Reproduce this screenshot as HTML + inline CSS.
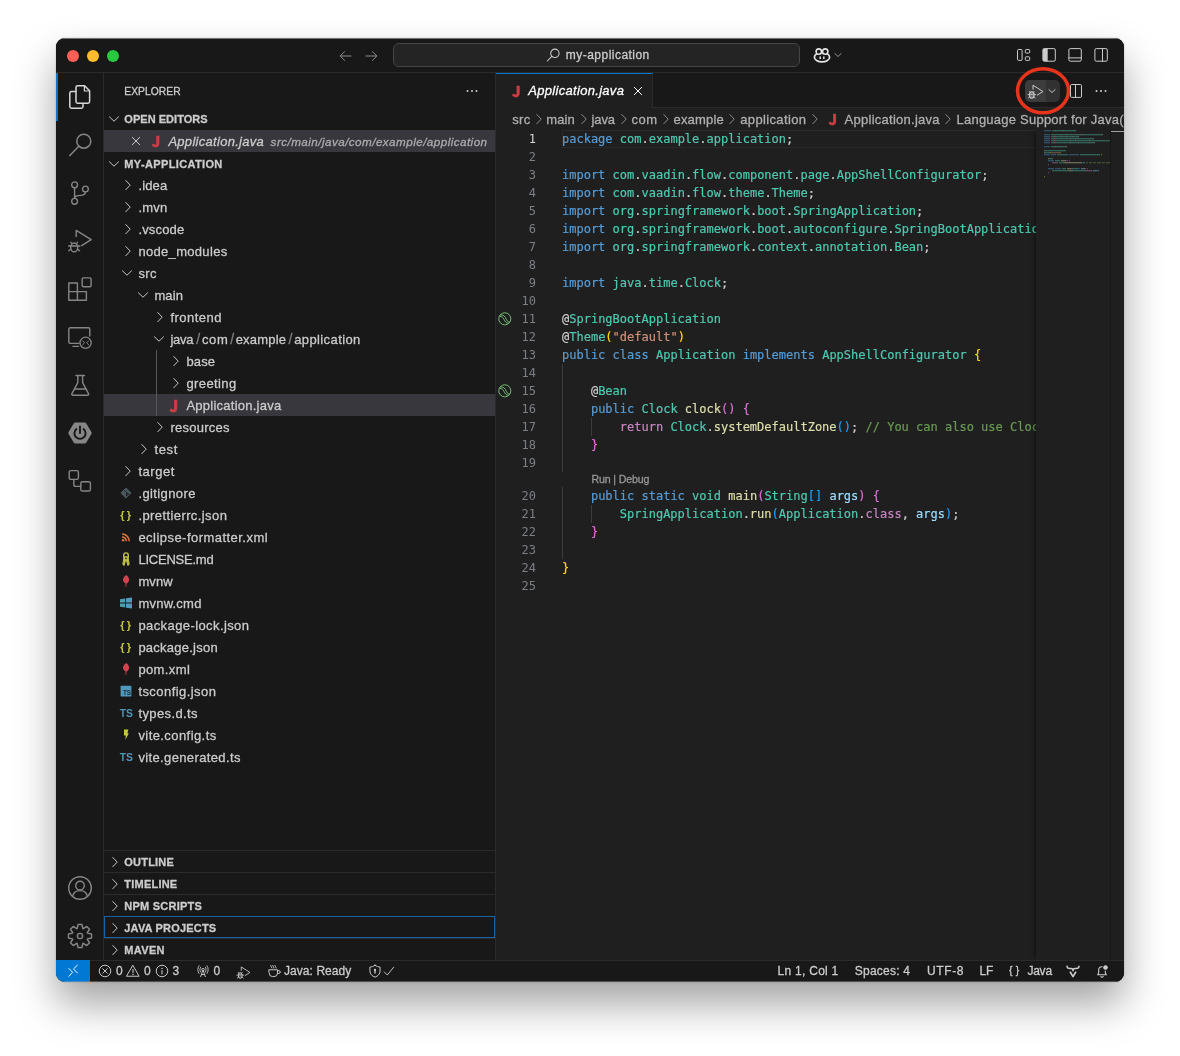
<!DOCTYPE html>
<html lang="en">
<head>
<meta charset="utf-8">
<title>Application.java — my-application</title>
<style>
html,body{margin:0;padding:0;background:#fff;}
body{width:1180px;height:1056px;position:relative;overflow:hidden;font-family:"Liberation Sans", sans-serif;}
#win{position:absolute;left:56px;top:38px;width:1068px;height:944px;border-radius:9px;background:#181818;box-shadow:0 22px 40px rgba(0,0,0,.36),0 0 1.5px rgba(0,0,0,.3);overflow:hidden;}
#in{position:absolute;left:-56px;top:-38px;width:1180px;height:1056px;will-change:transform;}
.a{position:absolute;display:block;}
.t{position:absolute;white-space:pre;font-family:"Liberation Sans", sans-serif;-webkit-text-stroke:0.28px currentColor;}
.jv{font-family:"Noto Sans CJK JP","Liberation Sans",sans-serif;-webkit-text-stroke:0.75px currentColor;}
svg{color:#ccc;overflow:visible;}
.code{position:absolute;left:496px;top:130px;width:540px;height:830px;overflow:hidden;font-family:"DejaVu Sans Mono","Liberation Mono",monospace;font-size:12px;color:#ccc;}
.ln{position:absolute;left:0;width:40px;text-align:right;height:18px;line-height:18px;color:#7b7f86;white-space:pre;}
.cl{position:absolute;left:66px;height:18px;line-height:18px;white-space:pre;-webkit-text-stroke:0.2px currentColor;}
.kw{color:#569cd6}.ty{color:#4ec9b0}.st{color:#ce9178}.fn{color:#dcdcaa}.ct{color:#c586c0}.va{color:#9cdcfe}.cm{color:#6a9955}
.b1{color:#ffd700}.b2{color:#da70d6}.b3{color:#179fff}
</style>
</head>
<body>
<div id="win"><div id="in">
<div class="a" style="left:56px;top:38px;width:1068px;height:35px;background:#181818;border-bottom:1px solid #2b2b2b;box-sizing:border-box;"></div>
<div class="a" style="left:67px;top:49.5px;width:12px;height:12px;background:#ff5f57;border-radius:50%;"></div>
<div class="a" style="left:87px;top:49.5px;width:12px;height:12px;background:#febc2e;border-radius:50%;"></div>
<div class="a" style="left:107px;top:49.5px;width:12px;height:12px;background:#28c840;border-radius:50%;"></div>
<svg class="a" style="left:337.3px;top:47.5px;color:#8e8e8e" width="16" height="16" viewBox="0 0 16 16"><path d="M14 8 H3.4 M7.6 3.6 L3.2 8 L7.6 12.4" fill="none" stroke="currentColor" stroke-linecap="round" stroke-linejoin="round" stroke-width="1.0" /></svg>
<svg class="a" style="left:363.3px;top:47.5px;color:#8e8e8e" width="16" height="16" viewBox="0 0 16 16"><path d="M3 8 H13.6 M9.4 3.6 L13.8 8 L9.4 12.4" fill="none" stroke="currentColor" stroke-linecap="round" stroke-linejoin="round" stroke-width="1.0" /></svg>
<div class="a" style="left:393px;top:43px;width:407px;height:24px;background:#242424;border:1px solid #464646;border-radius:6px;box-sizing:border-box;"></div>
<svg class="a" style="left:545.4px;top:46.8px;" width="16" height="16" viewBox="0 0 16 16"><circle cx="9.9" cy="6.3" r="4.2" fill="none" stroke="currentColor" stroke-width="1.05"/><path d="M6.8 9.4 L2.3 14.0" fill="none" stroke="currentColor" stroke-linecap="round" stroke-linejoin="round" stroke-width="1.05" /></svg>
<span class="t" style="left:565.8px;top:43.7px;height:22px;line-height:22px;font-size:12px;color:#cccccc;letter-spacing:0.471px;">my-application</span>
<svg class="a" style="left:812.5px;top:46px;color:#e4e4e4" width="18" height="18" viewBox="0 0 18 18"><ellipse cx="9" cy="11.2" rx="7.6" ry="4.7" fill="none" stroke="currentColor" stroke-width="1.7"/><circle cx="5.8" cy="5.6" r="2.7" fill="#181818" stroke="currentColor" stroke-width="1.6"/><circle cx="12.2" cy="5.6" r="2.7" fill="#181818" stroke="currentColor" stroke-width="1.6"/><path d="M7.2 10.4 V13 M10.8 10.4 V13" fill="none" stroke="currentColor" stroke-width="1.5"/></svg>
<svg class="a" style="left:829.5px;top:47px;color:#9a9a9a" width="16" height="16" viewBox="0 0 16 16"><path d="M4.9 6.6 L8 9.5 L11.1 6.6" fill="none" stroke="currentColor" stroke-linecap="round" stroke-linejoin="round" stroke-width="0.95" /></svg>
<svg class="a" style="left:1015px;top:47px;" width="16" height="16" viewBox="0 0 16 16"><rect x="2.5" y="2.5" width="4.6" height="10.9" rx="1.0" fill="none" stroke="currentColor" stroke-width="1.0"/><rect x="10.3" y="2.5" width="4.4" height="3.6" rx="0.9" fill="none" stroke="currentColor" stroke-width="1.0"/><rect x="10.3" y="9.8" width="4.4" height="3.6" rx="0.9" fill="none" stroke="currentColor" stroke-width="1.0"/></svg>
<svg class="a" style="left:1041px;top:47px;" width="16" height="16" viewBox="0 0 16 16"><rect x="1.9" y="1.6" width="12.4" height="12.6" rx="1.4" fill="none" stroke="currentColor" stroke-width="1.0"/><path d="M3.2 1.6 H6.7 V14.2 H3.2 A1.4 1.4 0 0 1 1.9 12.8 V3 A1.4 1.4 0 0 1 3.2 1.6 Z" fill="currentColor"/></svg>
<svg class="a" style="left:1067px;top:47px;" width="16" height="16" viewBox="0 0 16 16"><rect x="1.9" y="1.6" width="12.4" height="12.6" rx="1.4" fill="none" stroke="currentColor" stroke-width="1.0"/><path d="M1.9 10.9 H14.3" fill="none" stroke="currentColor" stroke-linecap="round" stroke-linejoin="round" stroke-width="1.0" /></svg>
<svg class="a" style="left:1093px;top:47px;" width="16" height="16" viewBox="0 0 16 16"><rect x="1.9" y="1.6" width="12.4" height="12.6" rx="1.4" fill="none" stroke="currentColor" stroke-width="1.0"/><path d="M9.5 1.6 V14.2" fill="none" stroke="currentColor" stroke-linecap="round" stroke-linejoin="round" stroke-width="1.0" /></svg>
<div class="a" style="left:56px;top:73px;width:48px;height:887px;background:#181818;border-right:1px solid #2b2b2b;box-sizing:border-box;"></div>
<div class="a" style="left:56px;top:73px;width:2px;height:48px;background:#0a74cc;"></div>
<svg class="a" style="left:68px;top:85px;color:#d7d7d7" width="24" height="24" viewBox="0 0 24 24"><path d="M9.6 0.8 H16.6 L21.6 5.8 V16.6 A1.6 1.6 0 0 1 20 18.2 H9.6 A1.6 1.6 0 0 1 8 16.6 V2.4 A1.6 1.6 0 0 1 9.6 0.8 Z" fill="none" stroke="currentColor" stroke-linecap="round" stroke-linejoin="round" stroke-width="1.5" /><path d="M16.4 1 V6 H21.4" fill="none" stroke="currentColor" stroke-linecap="round" stroke-linejoin="round" stroke-width="1.2" /><path d="M7.8 6.6 H3.4 A1.6 1.6 0 0 0 1.8 8.2 V21.6 A1.6 1.6 0 0 0 3.4 23.2 H13.4 A1.6 1.6 0 0 0 15 21.6 V18.4" fill="none" stroke="currentColor" stroke-linecap="round" stroke-linejoin="round" stroke-width="1.5" /></svg>
<svg class="a" style="left:68px;top:133px;color:#868686" width="24" height="24" viewBox="0 0 24 24"><circle cx="15.8" cy="8.2" r="7" fill="none" stroke="currentColor" stroke-width="1.5"/><path d="M10.8 13.2 L1.8 22.6" fill="none" stroke="currentColor" stroke-linecap="round" stroke-linejoin="round" stroke-width="1.5" /></svg>
<svg class="a" style="left:68px;top:181px;color:#868686" width="24" height="24" viewBox="0 0 24 24"><circle cx="6.6" cy="3.8" r="2.9" fill="none" stroke="currentColor" stroke-width="1.4"/><circle cx="6.6" cy="20.3" r="2.9" fill="none" stroke="currentColor" stroke-width="1.4"/><circle cx="17.4" cy="8" r="2.9" fill="none" stroke="currentColor" stroke-width="1.4"/><path d="M6.6 6.8 V17.3 M17.4 11 C17.4 14.4 13.6 14.6 10.4 14.6 C8 14.6 6.6 15.6 6.6 17.3" fill="none" stroke="currentColor" stroke-linecap="round" stroke-linejoin="round" stroke-width="1.4" /></svg>
<svg class="a" style="left:68px;top:229px;color:#868686" width="24" height="24" viewBox="0 0 24 24"><path d="M8.2 7.6 V1.4 L23.2 10.6 L13.6 16.6" fill="none" stroke="currentColor" stroke-linecap="round" stroke-linejoin="round" stroke-width="1.4" /><ellipse cx="6.2" cy="18.4" rx="3.5" ry="4.4" fill="none" stroke="currentColor" stroke-width="1.4"/><path d="M4 14.6 L2.8 13.2 M8.4 14.6 L9.6 13.2 M2.7 17 H0.6 M9.7 17 H11.8 M2.7 20.2 L0.8 21.8 M9.7 20.2 L11.6 21.8 M3 17 H9.4" fill="none" stroke="currentColor" stroke-linecap="round" stroke-linejoin="round" stroke-width="1.3" /></svg>
<svg class="a" style="left:68px;top:277px;color:#868686" width="24" height="24" viewBox="0 0 24 24"><path d="M0.8 6 H9.4 V14.6 H18.4 V23.2 H0.8 Z M0.8 14.6 H9.4 V23.2" fill="none" stroke="currentColor" stroke-linecap="round" stroke-linejoin="round" stroke-width="1.4" /><rect x="14.2" y="0.9" width="8.9" height="8.9" rx="1.2" fill="none" stroke="currentColor" stroke-width="1.4"/></svg>
<svg class="a" style="left:68px;top:325px;color:#868686" width="24" height="24" viewBox="0 0 24 24"><path d="M11 18.4 H2.2 A1.4 1.4 0 0 1 0.8 17 V4.2 A1.4 1.4 0 0 1 2.2 2.8 H20.4 A1.4 1.4 0 0 1 21.8 4.2 V11" fill="none" stroke="currentColor" stroke-linecap="round" stroke-linejoin="round" stroke-width="1.4" /><path d="M5 21.4 H10.4" fill="none" stroke="currentColor" stroke-linecap="round" stroke-linejoin="round" stroke-width="1.4" /><circle cx="17.6" cy="17.8" r="5.6" fill="none" stroke="currentColor" stroke-width="1.3"/><path d="M14.6 15.8 L16.6 17.8 L14.6 19.8 M20.6 15.8 L18.6 17.8 L20.6 19.8" fill="none" stroke="currentColor" stroke-linecap="round" stroke-linejoin="round" stroke-width="1.0" /></svg>
<svg class="a" style="left:68px;top:373px;color:#868686" width="24" height="24" viewBox="0 0 24 24"><path d="M8 2.6 H16.4" fill="none" stroke="currentColor" stroke-linecap="round" stroke-linejoin="round" stroke-width="1.5" /><path d="M9.8 2.8 V9.6 L3.8 20.8 A1 1 0 0 0 4.6 22.2 H19.8 A1 1 0 0 0 20.6 20.8 L14.6 9.6 V2.8" fill="none" stroke="currentColor" stroke-linecap="round" stroke-linejoin="round" stroke-width="1.4" /><path d="M6.6 16 H17.8" fill="none" stroke="currentColor" stroke-linecap="round" stroke-linejoin="round" stroke-width="1.4" /></svg>
<svg class="a" style="left:68px;top:421px;color:#868686" width="24" height="24" viewBox="0 0 24 24"><path d="M7.4 1.4 H16.6 A2 2 0 0 1 18.3 2.4 L23.4 11 A2 2 0 0 1 23.4 13 L18.3 21.6 A2 2 0 0 1 16.6 22.6 H7.4 A2 2 0 0 1 5.7 21.6 L0.6 13 A2 2 0 0 1 0.6 11 L5.7 2.4 A2 2 0 0 1 7.4 1.4 Z" fill="currentColor"/><path d="M8.4 8 A5.6 5.6 0 1 0 15.6 8" fill="none" stroke="#181818" stroke-width="1.9" stroke-linecap="round"/><path d="M12 5.4 V12" fill="none" stroke="#181818" stroke-width="1.9" stroke-linecap="round"/></svg>
<svg class="a" style="left:68px;top:469px;color:#868686" width="24" height="24" viewBox="0 0 24 24"><rect x="1.2" y="1.6" width="9.2" height="8.8" rx="1.6" fill="none" stroke="currentColor" stroke-width="1.4"/><rect x="12.8" y="12.8" width="9.6" height="9.2" rx="1.6" fill="none" stroke="currentColor" stroke-width="1.4"/><path d="M5.8 10.6 V15.4 A2 2 0 0 0 7.8 17.4 H12.6" fill="none" stroke="currentColor" stroke-linecap="round" stroke-linejoin="round" stroke-width="1.4" /></svg>
<svg class="a" style="left:68px;top:876px;color:#868686" width="24" height="24" viewBox="0 0 24 24"><circle cx="12" cy="12" r="11.3" fill="none" stroke="currentColor" stroke-width="1.4"/><circle cx="12" cy="9.6" r="4.3" fill="none" stroke="currentColor" stroke-width="1.4"/><path d="M4.6 20.4 C5.4 16.6 8 14.6 12 14.6 C16 14.6 18.6 16.6 19.4 20.4" fill="none" stroke="currentColor" stroke-linecap="round" stroke-linejoin="round" stroke-width="1.4" /></svg>
<svg class="a" style="left:68px;top:924px;color:#868686" width="24" height="24" viewBox="0 0 24 24"><path d="M9.18 4.51 L10.02 0.47 L13.98 0.47 L14.82 4.51 L15.30 4.71 L18.75 2.45 L21.55 5.25 L19.29 8.70 L19.49 9.18 L23.53 10.02 L23.53 13.98 L19.49 14.82 L19.29 15.30 L21.55 18.75 L18.75 21.55 L15.30 19.29 L14.82 19.49 L13.98 23.53 L10.02 23.53 L9.18 19.49 L8.70 19.29 L5.25 21.55 L2.45 18.75 L4.71 15.30 L4.51 14.82 L0.47 13.98 L0.47 10.02 L4.51 9.18 L4.71 8.70 L2.45 5.25 L5.25 2.45 L8.70 4.71 Z" fill="none" stroke="currentColor" stroke-linecap="round" stroke-linejoin="round" stroke-width="1.4" /><circle cx="12" cy="12" r="2.6" fill="none" stroke="currentColor" stroke-width="1.4"/></svg>
<div class="a" style="left:104px;top:73px;width:392px;height:887px;background:#181818;border-right:1px solid #2b2b2b;box-sizing:border-box;"></div>
<span class="t" style="left:124.3px;top:80.6px;height:22px;line-height:22px;font-size:10.3px;color:#cccccc;letter-spacing:0.029px;">EXPLORER</span>
<svg class="a" style="left:464px;top:83px;" width="16" height="16" viewBox="0 0 16 16"><circle cx="3.5" cy="8" r="1" fill="currentColor"/><circle cx="8" cy="8" r="1" fill="currentColor"/><circle cx="12.5" cy="8" r="1" fill="currentColor"/></svg>
<svg class="a" style="left:106.3px;top:111px;" width="16" height="16" viewBox="0 0 16 16"><path d="M3.4 5.8 L8 10.2 L12.6 5.8" fill="none" stroke="currentColor" stroke-linecap="round" stroke-linejoin="round" stroke-width="0.95" /></svg>
<span class="t" style="left:124.3px;top:107.6px;height:22px;line-height:22px;font-size:11px;color:#cccccc;font-weight:700;letter-spacing:0.042px;">OPEN EDITORS</span>
<div class="a" style="left:104px;top:130px;width:391px;height:22px;background:#37373d;"></div>
<svg class="a" style="left:128px;top:133px;" width="16" height="16" viewBox="0 0 16 16"><path d="M4.3 4.3 L11.7 11.7 M11.7 4.3 L4.3 11.7" fill="none" stroke="currentColor" stroke-linecap="round" stroke-linejoin="round" stroke-width="1.0" /></svg>
<span class="t jv" style="left:151.8px;top:130.2px;height:22px;line-height:22px;font-size:15px;color:#cc3e44;font-weight:700;">J</span>
<span class="t" style="left:168.4px;top:130.6px;height:22px;line-height:22px;font-size:13px;color:#cccccc;font-style:italic;letter-spacing:0.289px;">Application.java</span>
<span class="t" style="left:270.6px;top:130.6px;height:22px;line-height:22px;font-size:11.7px;color:#adadaf;font-style:italic;letter-spacing:0.438px;">src/main/java/com/example/application</span>
<svg class="a" style="left:106.3px;top:156px;" width="16" height="16" viewBox="0 0 16 16"><path d="M3.4 5.8 L8 10.2 L12.6 5.8" fill="none" stroke="currentColor" stroke-linecap="round" stroke-linejoin="round" stroke-width="0.95" /></svg>
<span class="t" style="left:124.3px;top:152.6px;height:22px;line-height:22px;font-size:11px;color:#cccccc;font-weight:700;letter-spacing:0.362px;">MY-APPLICATION</span>
<svg class="a" style="left:119.8px;top:177px;" width="16" height="16" viewBox="0 0 16 16"><path d="M5.8 3.5 L10.2 8.1 L5.8 12.7" fill="none" stroke="currentColor" stroke-linecap="round" stroke-linejoin="round" stroke-width="0.95" /></svg>
<span class="t" style="left:138.4px;top:174.6px;height:22px;line-height:22px;font-size:13px;color:#cccccc;letter-spacing:0.149px;">.idea</span>
<svg class="a" style="left:119.8px;top:199px;" width="16" height="16" viewBox="0 0 16 16"><path d="M5.8 3.5 L10.2 8.1 L5.8 12.7" fill="none" stroke="currentColor" stroke-linecap="round" stroke-linejoin="round" stroke-width="0.95" /></svg>
<span class="t" style="left:138.4px;top:196.6px;height:22px;line-height:22px;font-size:13px;color:#cccccc;letter-spacing:0.209px;">.mvn</span>
<svg class="a" style="left:119.8px;top:221px;" width="16" height="16" viewBox="0 0 16 16"><path d="M5.8 3.5 L10.2 8.1 L5.8 12.7" fill="none" stroke="currentColor" stroke-linecap="round" stroke-linejoin="round" stroke-width="0.95" /></svg>
<span class="t" style="left:138.4px;top:218.6px;height:22px;line-height:22px;font-size:13px;color:#cccccc;letter-spacing:0.165px;">.vscode</span>
<svg class="a" style="left:119.8px;top:243px;" width="16" height="16" viewBox="0 0 16 16"><path d="M5.8 3.5 L10.2 8.1 L5.8 12.7" fill="none" stroke="currentColor" stroke-linecap="round" stroke-linejoin="round" stroke-width="0.95" /></svg>
<span class="t" style="left:138.4px;top:240.6px;height:22px;line-height:22px;font-size:13px;color:#cccccc;letter-spacing:0.318px;">node_modules</span>
<svg class="a" style="left:119.1px;top:265.3px;" width="16" height="16" viewBox="0 0 16 16"><path d="M3.4 5.8 L8 10.2 L12.6 5.8" fill="none" stroke="currentColor" stroke-linecap="round" stroke-linejoin="round" stroke-width="0.95" /></svg>
<span class="t" style="left:138.4px;top:262.6px;height:22px;line-height:22px;font-size:13px;color:#cccccc;letter-spacing:0.328px;">src</span>
<svg class="a" style="left:135.1px;top:287.3px;" width="16" height="16" viewBox="0 0 16 16"><path d="M3.4 5.8 L8 10.2 L12.6 5.8" fill="none" stroke="currentColor" stroke-linecap="round" stroke-linejoin="round" stroke-width="0.95" /></svg>
<span class="t" style="left:154.4px;top:284.6px;height:22px;line-height:22px;font-size:13px;color:#cccccc;letter-spacing:0.104px;">main</span>
<svg class="a" style="left:151.8px;top:309px;" width="16" height="16" viewBox="0 0 16 16"><path d="M5.8 3.5 L10.2 8.1 L5.8 12.7" fill="none" stroke="currentColor" stroke-linecap="round" stroke-linejoin="round" stroke-width="0.95" /></svg>
<span class="t" style="left:170.4px;top:306.6px;height:22px;line-height:22px;font-size:13px;color:#cccccc;letter-spacing:0.471px;">frontend</span>
<svg class="a" style="left:151.1px;top:331.3px;" width="16" height="16" viewBox="0 0 16 16"><path d="M3.4 5.8 L8 10.2 L12.6 5.8" fill="none" stroke="currentColor" stroke-linecap="round" stroke-linejoin="round" stroke-width="0.95" /></svg>
<span class="t" style="left:170.4px;top:328.6px;height:22px;line-height:22px;font-size:13px;color:#cccccc;letter-spacing:-0.253px;">java</span>
<span class="t" style="left:201.9px;top:328.6px;height:22px;line-height:22px;font-size:13px;color:#cccccc;letter-spacing:0.669px;">com</span>
<span class="t" style="left:235.7px;top:328.6px;height:22px;line-height:22px;font-size:13px;color:#cccccc;letter-spacing:0.193px;">example</span>
<span class="t" style="left:294.2px;top:328.6px;height:22px;line-height:22px;font-size:13px;color:#cccccc;letter-spacing:0.394px;">application</span>
<span class="t" style="left:196.3px;top:328.3px;height:22px;line-height:22px;font-size:14px;color:#7f7f7f;">/</span>
<span class="t" style="left:230.3px;top:328.3px;height:22px;line-height:22px;font-size:14px;color:#7f7f7f;">/</span>
<span class="t" style="left:288.4px;top:328.3px;height:22px;line-height:22px;font-size:14px;color:#7f7f7f;">/</span>
<svg class="a" style="left:167.8px;top:353px;" width="16" height="16" viewBox="0 0 16 16"><path d="M5.8 3.5 L10.2 8.1 L5.8 12.7" fill="none" stroke="currentColor" stroke-linecap="round" stroke-linejoin="round" stroke-width="0.95" /></svg>
<span class="t" style="left:186.4px;top:350.6px;height:22px;line-height:22px;font-size:13px;color:#cccccc;letter-spacing:0.166px;">base</span>
<svg class="a" style="left:167.8px;top:375px;" width="16" height="16" viewBox="0 0 16 16"><path d="M5.8 3.5 L10.2 8.1 L5.8 12.7" fill="none" stroke="currentColor" stroke-linecap="round" stroke-linejoin="round" stroke-width="0.95" /></svg>
<span class="t" style="left:186.4px;top:372.6px;height:22px;line-height:22px;font-size:13px;color:#cccccc;letter-spacing:0.402px;">greeting</span>
<div class="a" style="left:104px;top:394px;width:391px;height:22px;background:#37373d;"></div>
<span class="t" style="-webkit-text-stroke:0.75px currentColor;left:161.8px;top:394.2px;width:24px;text-align:center;height:22px;line-height:22px;font-size:15.4px;font-weight:700;color:#cc3e44;letter-spacing:0px;font-family:'Noto Sans CJK JP','Liberation Sans',sans-serif">J</span>
<span class="t" style="left:186.4px;top:394.6px;height:22px;line-height:22px;font-size:13px;color:#cccccc;letter-spacing:0.249px;">Application.java</span>
<svg class="a" style="left:151.8px;top:419px;" width="16" height="16" viewBox="0 0 16 16"><path d="M5.8 3.5 L10.2 8.1 L5.8 12.7" fill="none" stroke="currentColor" stroke-linecap="round" stroke-linejoin="round" stroke-width="0.95" /></svg>
<span class="t" style="left:170.4px;top:416.6px;height:22px;line-height:22px;font-size:13px;color:#cccccc;letter-spacing:0.265px;">resources</span>
<svg class="a" style="left:135.8px;top:441px;" width="16" height="16" viewBox="0 0 16 16"><path d="M5.8 3.5 L10.2 8.1 L5.8 12.7" fill="none" stroke="currentColor" stroke-linecap="round" stroke-linejoin="round" stroke-width="0.95" /></svg>
<span class="t" style="left:154.4px;top:438.6px;height:22px;line-height:22px;font-size:13px;color:#cccccc;letter-spacing:0.644px;">test</span>
<svg class="a" style="left:119.8px;top:463px;" width="16" height="16" viewBox="0 0 16 16"><path d="M5.8 3.5 L10.2 8.1 L5.8 12.7" fill="none" stroke="currentColor" stroke-linecap="round" stroke-linejoin="round" stroke-width="0.95" /></svg>
<span class="t" style="left:138.4px;top:460.6px;height:22px;line-height:22px;font-size:13px;color:#cccccc;letter-spacing:0.53px;">target</span>
<svg class="a" style="left:117.9px;top:485px;color:#ccc" width="16" height="16" viewBox="0 0 16 16"><path d="M8 2.9 L13.1 8 L8 13.1 L2.9 8 Z" fill="#4a575d" stroke="#4a575d" stroke-width="1" stroke-linejoin="round"/><path d="M6.6 5.4 L8.6 7.4 V10.4 M8.6 7.6 L10.2 9.2" fill="none" stroke="#181818" stroke-width="0.9"/><circle cx="8.6" cy="10.6" r="0.8" fill="#181818"/><circle cx="10.3" cy="9.3" r="0.8" fill="#181818"/></svg>
<span class="t" style="left:138.4px;top:482.6px;height:22px;line-height:22px;font-size:13px;color:#cccccc;letter-spacing:0.391px;">.gitignore</span>
<span class="t" style="-webkit-text-stroke:0px currentColor;left:114px;top:503.5px;width:24px;text-align:center;height:22px;line-height:22px;font-size:11px;font-weight:700;color:#c2c546;letter-spacing:0.7px;font-family:'Liberation Sans',sans-serif">{&hairsp;}</span>
<span class="t" style="left:138.4px;top:504.6px;height:22px;line-height:22px;font-size:13px;color:#cccccc;letter-spacing:0.408px;">.prettierrc.json</span>
<svg class="a" style="left:117.9px;top:529px;color:#d9763a" width="16" height="16" viewBox="0 0 16 16"><circle cx="5.1" cy="11.2" r="1.2" fill="currentColor"/><path d="M4 7.9 A4.2 4.2 0 0 1 8.3 12.2" fill="none" stroke="currentColor" stroke-width="1.5"/><path d="M4 5 A7.2 7.2 0 0 1 11.2 12.2" fill="none" stroke="currentColor" stroke-width="1.5"/></svg>
<span class="t" style="left:138.4px;top:526.6px;height:22px;line-height:22px;font-size:13px;color:#cccccc;letter-spacing:0.464px;">eclipse-formatter.xml</span>
<svg class="a" style="left:117.7px;top:551px;color:#bdc043" width="16" height="16" viewBox="0 0 16 16"><path d="M8 1.9 A2.3 2.3 0 0 1 10.3 4.2 V6 H5.7 V4.2 A2.3 2.3 0 0 1 8 1.9 Z" fill="none" stroke="currentColor" stroke-width="1.4"/><path d="M6 6 L4.8 13.4 L6.2 14.4 L7.6 9 Z M10 6 L11.2 13.4 L9.8 14.4 L8.4 9 Z" fill="currentColor" stroke="currentColor" stroke-width="1" stroke-linejoin="round"/></svg>
<span class="t" style="left:138.4px;top:548.6px;height:22px;line-height:22px;font-size:13px;color:#cccccc;letter-spacing:-0.224px;">LICENSE.md</span>
<svg class="a" style="left:117.8px;top:573px;color:#d2454f" width="16" height="16" viewBox="0 0 16 16"><path d="M8.3 1.9 C10.4 3.4 11.2 5.4 11 7.2 C10.8 8.8 9.8 9.8 8.6 10.6 L8.1 13.9 L7.5 13.9 L7.6 10.6 C6 9.6 5 8.2 5 6.6 C5 4.8 6.4 3.2 8.3 1.9 Z" fill="currentColor"/></svg>
<span class="t" style="left:138.4px;top:570.6px;height:22px;line-height:22px;font-size:13px;color:#cccccc;letter-spacing:0.116px;">mvnw</span>
<svg class="a" style="left:117.9px;top:595px;color:#519aba" width="16" height="16" viewBox="0 0 16 16"><path d="M2 4.2 L7.2 3.4 V7.6 H2 Z M8 3.3 L14 2.4 V7.6 H8 Z M2 8.4 H7.2 V12.6 L2 11.8 Z M8 8.4 H14 V13.6 L8 12.7 Z" fill="currentColor"/></svg>
<span class="t" style="left:138.4px;top:592.6px;height:22px;line-height:22px;font-size:13px;color:#cccccc;letter-spacing:0.228px;">mvnw.cmd</span>
<span class="t" style="-webkit-text-stroke:0px currentColor;left:114px;top:613.5px;width:24px;text-align:center;height:22px;line-height:22px;font-size:11px;font-weight:700;color:#c2c546;letter-spacing:0.7px;font-family:'Liberation Sans',sans-serif">{&hairsp;}</span>
<span class="t" style="left:138.4px;top:614.6px;height:22px;line-height:22px;font-size:13px;color:#cccccc;letter-spacing:0.409px;">package-lock.json</span>
<span class="t" style="-webkit-text-stroke:0px currentColor;left:114px;top:635.5px;width:24px;text-align:center;height:22px;line-height:22px;font-size:11px;font-weight:700;color:#c2c546;letter-spacing:0.7px;font-family:'Liberation Sans',sans-serif">{&hairsp;}</span>
<span class="t" style="left:138.4px;top:636.6px;height:22px;line-height:22px;font-size:13px;color:#cccccc;letter-spacing:0.243px;">package.json</span>
<svg class="a" style="left:117.8px;top:661px;color:#d2454f" width="16" height="16" viewBox="0 0 16 16"><path d="M8.3 1.9 C10.4 3.4 11.2 5.4 11 7.2 C10.8 8.8 9.8 9.8 8.6 10.6 L8.1 13.9 L7.5 13.9 L7.6 10.6 C6 9.6 5 8.2 5 6.6 C5 4.8 6.4 3.2 8.3 1.9 Z" fill="currentColor"/></svg>
<span class="t" style="left:138.4px;top:658.6px;height:22px;line-height:22px;font-size:13px;color:#cccccc;letter-spacing:0.379px;">pom.xml</span>
<svg class="a" style="left:117.9px;top:683px;color:#4f98bb" width="16" height="16" viewBox="0 0 16 16"><rect x="2.6" y="2.8" width="10.8" height="10.6" rx="0.6" fill="currentColor"/></svg>
<span class="t" style="-webkit-text-stroke:0px currentColor;left:114.9px;top:682px;width:24px;text-align:center;height:22px;line-height:22px;font-size:6.4px;font-weight:700;color:#1b2a33;letter-spacing:-0.2px;font-family:'Liberation Sans',sans-serif">TS</span>
<span class="t" style="left:138.4px;top:680.6px;height:22px;line-height:22px;font-size:13px;color:#cccccc;letter-spacing:0.436px;">tsconfig.json</span>
<span class="t" style="-webkit-text-stroke:0px currentColor;left:114.2px;top:702.5px;width:24px;text-align:center;height:22px;line-height:22px;font-size:10.4px;font-weight:700;color:#4f93b6;letter-spacing:-0.3px;font-family:'Liberation Sans',sans-serif">TS</span>
<span class="t" style="left:138.4px;top:702.6px;height:22px;line-height:22px;font-size:13px;color:#cccccc;letter-spacing:0.395px;">types.d.ts</span>
<svg class="a" style="left:117.7px;top:727px;color:#c3c743" width="16" height="16" viewBox="0 0 16 16"><path d="M6 2.6 H10.4 L9.4 6.2 H10.8 L7.4 13 L7.8 8.4 H6 Z" fill="currentColor"/></svg>
<span class="t" style="left:138.4px;top:724.6px;height:22px;line-height:22px;font-size:13px;color:#cccccc;letter-spacing:0.426px;">vite.config.ts</span>
<span class="t" style="-webkit-text-stroke:0px currentColor;left:114.2px;top:746.5px;width:24px;text-align:center;height:22px;line-height:22px;font-size:10.4px;font-weight:700;color:#4f93b6;letter-spacing:-0.3px;font-family:'Liberation Sans',sans-serif">TS</span>
<span class="t" style="left:138.4px;top:746.6px;height:22px;line-height:22px;font-size:13px;color:#cccccc;letter-spacing:0.367px;">vite.generated.ts</span>
<div class="a" style="left:156px;top:350px;width:1px;height:66px;background:#585858;"></div>
<div class="a" style="left:104px;top:850px;width:391px;height:1px;background:#2b2b2b;"></div>
<svg class="a" style="left:107px;top:854px;" width="16" height="16" viewBox="0 0 16 16"><path d="M5.8 3.5 L10.2 8.1 L5.8 12.7" fill="none" stroke="currentColor" stroke-linecap="round" stroke-linejoin="round" stroke-width="0.95" /></svg>
<span class="t" style="left:124.3px;top:850.6px;height:22px;line-height:22px;font-size:11px;color:#cccccc;font-weight:700;letter-spacing:0.203px;">OUTLINE</span>
<div class="a" style="left:104px;top:872px;width:391px;height:1px;background:#2b2b2b;"></div>
<svg class="a" style="left:107px;top:876px;" width="16" height="16" viewBox="0 0 16 16"><path d="M5.8 3.5 L10.2 8.1 L5.8 12.7" fill="none" stroke="currentColor" stroke-linecap="round" stroke-linejoin="round" stroke-width="0.95" /></svg>
<span class="t" style="left:124.3px;top:872.6px;height:22px;line-height:22px;font-size:11px;color:#cccccc;font-weight:700;letter-spacing:0.222px;">TIMELINE</span>
<div class="a" style="left:104px;top:894px;width:391px;height:1px;background:#2b2b2b;"></div>
<svg class="a" style="left:107px;top:898px;" width="16" height="16" viewBox="0 0 16 16"><path d="M5.8 3.5 L10.2 8.1 L5.8 12.7" fill="none" stroke="currentColor" stroke-linecap="round" stroke-linejoin="round" stroke-width="0.95" /></svg>
<span class="t" style="left:124.3px;top:894.6px;height:22px;line-height:22px;font-size:11px;color:#cccccc;font-weight:700;letter-spacing:0.241px;">NPM SCRIPTS</span>
<div class="a" style="left:104px;top:916px;width:391px;height:1px;background:#2b2b2b;"></div>
<div class="a" style="left:104px;top:916px;width:391px;height:22px;border:1px solid #1763a6;box-sizing:border-box;"></div>
<svg class="a" style="left:107px;top:920px;" width="16" height="16" viewBox="0 0 16 16"><path d="M5.8 3.5 L10.2 8.1 L5.8 12.7" fill="none" stroke="currentColor" stroke-linecap="round" stroke-linejoin="round" stroke-width="0.95" /></svg>
<span class="t" style="left:124.3px;top:916.6px;height:22px;line-height:22px;font-size:11px;color:#cccccc;font-weight:700;letter-spacing:0.187px;">JAVA PROJECTS</span>
<div class="a" style="left:104px;top:938px;width:391px;height:1px;background:#2b2b2b;"></div>
<svg class="a" style="left:107px;top:942px;" width="16" height="16" viewBox="0 0 16 16"><path d="M5.8 3.5 L10.2 8.1 L5.8 12.7" fill="none" stroke="currentColor" stroke-linecap="round" stroke-linejoin="round" stroke-width="0.95" /></svg>
<span class="t" style="left:124.3px;top:938.6px;height:22px;line-height:22px;font-size:11px;color:#cccccc;font-weight:700;letter-spacing:0.32px;">MAVEN</span>
<div class="a" style="left:496px;top:73px;width:628px;height:887px;background:#1f1f1f;"></div>
<div class="a" style="left:496px;top:73px;width:628px;height:35px;background:#181818;border-bottom:1px solid #2b2b2b;box-sizing:border-box;"></div>
<div class="a" style="left:496px;top:73px;width:157px;height:35px;background:#1f1f1f;border-top:1px solid #0078d4;border-right:1px solid #2b2b2b;box-sizing:border-box;"></div>
<span class="t jv" style="left:512px;top:80.2px;height:22px;line-height:22px;font-size:15px;color:#cc3e44;font-weight:700;">J</span>
<span class="t" style="left:528.3px;top:79.6px;height:22px;line-height:22px;font-size:13px;color:#fff;font-style:italic;letter-spacing:0.302px;">Application.java</span>
<svg class="a" style="left:630.4px;top:83px;color:#fff" width="16" height="16" viewBox="0 0 16 16"><path d="M4.3 4.3 L11.7 11.7 M11.7 4.3 L4.3 11.7" fill="none" stroke="currentColor" stroke-linecap="round" stroke-linejoin="round" stroke-width="1.0" /></svg>
<div class="a" style="left:1025px;top:80px;width:35px;height:22px;background:#313131;border-radius:5px;"></div>
<div class="a" style="left:1025px;top:80px;width:21px;height:22px;background:#3c3c3c;border-radius:5px 0 0 5px;"></div>
<svg class="a" style="left:1027px;top:83px;" width="16" height="16" viewBox="0 0 16 16"><path d="M6 6.2 V2.2 L15.9 8.5 L10.4 12.1" fill="none" stroke="currentColor" stroke-linecap="round" stroke-linejoin="round" stroke-width="1.0" /><ellipse cx="4.8" cy="12" rx="2.3" ry="3.2" fill="currentColor" fill-opacity=".3" stroke="currentColor" stroke-width="1.1"/><path d="M3.2 9.3 L2.5 8.4 M6.4 9.3 L7.1 8.4 M2.4 11.6 H0.9 M7.2 11.6 H8.7 M2.7 13.8 L1.3 15 M6.9 13.8 L8.3 15" fill="none" stroke="currentColor" stroke-linecap="round" stroke-linejoin="round" stroke-width="0.85" /><path d="M2.9 11.3 H6.7" fill="none" stroke="currentColor" stroke-linecap="round" stroke-linejoin="round" stroke-width="0.8" /></svg>
<svg class="a" style="left:1044.2px;top:83px;" width="16" height="16" viewBox="0 0 16 16"><path d="M4.9 6.6 L8 9.5 L11.1 6.6" fill="none" stroke="currentColor" stroke-linecap="round" stroke-linejoin="round" stroke-width="0.95" /></svg>
<svg class="a" style="left:1068px;top:82.5px;" width="16" height="16" viewBox="0 0 16 16"><rect x="2.5" y="1.5" width="11" height="12.9" rx="1.2" fill="none" stroke="currentColor" stroke-width="1.0"/><path d="M7.5 1.5 V14.4" fill="none" stroke="currentColor" stroke-linecap="round" stroke-linejoin="round" stroke-width="1.0" /></svg>
<svg class="a" style="left:1093px;top:83px;" width="16" height="16" viewBox="0 0 16 16"><circle cx="3.5" cy="8" r="1" fill="currentColor"/><circle cx="8" cy="8" r="1" fill="currentColor"/><circle cx="12.5" cy="8" r="1" fill="currentColor"/></svg>
<span class="t" style="left:512.3px;top:108.6px;height:22px;line-height:22px;font-size:13px;color:#b0b0b0;letter-spacing:0.328px;">src</span>
<span class="t" style="left:546.3px;top:108.6px;height:22px;line-height:22px;font-size:13px;color:#b0b0b0;letter-spacing:0.104px;">main</span>
<span class="t" style="left:591.6px;top:108.6px;height:22px;line-height:22px;font-size:13px;color:#b0b0b0;letter-spacing:-0.153px;">java</span>
<span class="t" style="left:631.5px;top:108.6px;height:22px;line-height:22px;font-size:13px;color:#b0b0b0;letter-spacing:0.569px;">com</span>
<span class="t" style="left:673.5px;top:108.6px;height:22px;line-height:22px;font-size:13px;color:#b0b0b0;letter-spacing:0.193px;">example</span>
<span class="t" style="left:740.2px;top:108.6px;height:22px;line-height:22px;font-size:13px;color:#b0b0b0;letter-spacing:0.364px;">application</span>
<svg class="a" style="left:531.2px;top:111.3px;color:#929292" width="16" height="16" viewBox="0 0 16 16"><path d="M5.8 3.5 L10.2 8.1 L5.8 12.7" fill="none" stroke="currentColor" stroke-linecap="round" stroke-linejoin="round" stroke-width="0.95" /></svg>
<svg class="a" style="left:575.7px;top:111.3px;color:#929292" width="16" height="16" viewBox="0 0 16 16"><path d="M5.8 3.5 L10.2 8.1 L5.8 12.7" fill="none" stroke="currentColor" stroke-linecap="round" stroke-linejoin="round" stroke-width="0.95" /></svg>
<svg class="a" style="left:616.1px;top:111.3px;color:#929292" width="16" height="16" viewBox="0 0 16 16"><path d="M5.8 3.5 L10.2 8.1 L5.8 12.7" fill="none" stroke="currentColor" stroke-linecap="round" stroke-linejoin="round" stroke-width="0.95" /></svg>
<svg class="a" style="left:658.1px;top:111.3px;color:#929292" width="16" height="16" viewBox="0 0 16 16"><path d="M5.8 3.5 L10.2 8.1 L5.8 12.7" fill="none" stroke="currentColor" stroke-linecap="round" stroke-linejoin="round" stroke-width="0.95" /></svg>
<svg class="a" style="left:724.2px;top:111.3px;color:#929292" width="16" height="16" viewBox="0 0 16 16"><path d="M5.8 3.5 L10.2 8.1 L5.8 12.7" fill="none" stroke="currentColor" stroke-linecap="round" stroke-linejoin="round" stroke-width="0.95" /></svg>
<svg class="a" style="left:806.9px;top:111.3px;color:#929292" width="16" height="16" viewBox="0 0 16 16"><path d="M5.8 3.5 L10.2 8.1 L5.8 12.7" fill="none" stroke="currentColor" stroke-linecap="round" stroke-linejoin="round" stroke-width="0.95" /></svg>
<svg class="a" style="left:940.1px;top:111.3px;color:#929292" width="16" height="16" viewBox="0 0 16 16"><path d="M5.8 3.5 L10.2 8.1 L5.8 12.7" fill="none" stroke="currentColor" stroke-linecap="round" stroke-linejoin="round" stroke-width="0.95" /></svg>
<span class="t jv" style="left:828.6px;top:108.4px;height:22px;line-height:22px;font-size:15px;color:#cc3e44;font-weight:700;">J</span>
<span class="t" style="left:844.6px;top:108.6px;height:22px;line-height:22px;font-size:13px;color:#b0b0b0;letter-spacing:0.263px;">Application.java</span>
<div class="a" style="left:956.5px;top:108px;width:167.5px;height:22px;overflow:hidden"><span class="t" style="left:0;top:0.6px;height:22px;line-height:22px;font-size:13px;color:#b0b0b0;letter-spacing:0.233px">Language Support for Java(TM) by Red Hat</span></div>
<div class="code">
<div class="a" style="left:66px;top:0;width:480px;height:18px;border:1px solid #2a2a2a;box-sizing:border-box;"></div>
<div class="a" style="left:66px;top:234px;width:1px;height:108px;background:#3d3d3d"></div>
<div class="a" style="left:66px;top:357px;width:1px;height:72px;background:#3d3d3d"></div>
<div class="a" style="left:95px;top:288px;width:1px;height:18px;background:#3d3d3d"></div>
<div class="a" style="left:95px;top:375px;width:1px;height:18px;background:#3d3d3d"></div>
<div class="ln" style="top:0px;color:#d4d4d4">1</div>
<div class="cl" style="top:0px"><span class="kw">package</span> <span class="ty">com</span>.<span class="ty">example</span>.<span class="ty">application</span>;</div>
<div class="ln" style="top:18px;color:#7b7f86">2</div>
<div class="ln" style="top:36px;color:#7b7f86">3</div>
<div class="cl" style="top:36px"><span class="kw">import</span> <span class="ty">com</span>.<span class="ty">vaadin</span>.<span class="ty">flow</span>.<span class="ty">component</span>.<span class="ty">page</span>.<span class="ty">AppShellConfigurator</span>;</div>
<div class="ln" style="top:54px;color:#7b7f86">4</div>
<div class="cl" style="top:54px"><span class="kw">import</span> <span class="ty">com</span>.<span class="ty">vaadin</span>.<span class="ty">flow</span>.<span class="ty">theme</span>.<span class="ty">Theme</span>;</div>
<div class="ln" style="top:72px;color:#7b7f86">5</div>
<div class="cl" style="top:72px"><span class="kw">import</span> <span class="ty">org</span>.<span class="ty">springframework</span>.<span class="ty">boot</span>.<span class="ty">SpringApplication</span>;</div>
<div class="ln" style="top:90px;color:#7b7f86">6</div>
<div class="cl" style="top:90px"><span class="kw">import</span> <span class="ty">org</span>.<span class="ty">springframework</span>.<span class="ty">boot</span>.<span class="ty">autoconfigure</span>.<span class="ty">SpringBootApplication</span>;</div>
<div class="ln" style="top:108px;color:#7b7f86">7</div>
<div class="cl" style="top:108px"><span class="kw">import</span> <span class="ty">org</span>.<span class="ty">springframework</span>.<span class="ty">context</span>.<span class="ty">annotation</span>.<span class="ty">Bean</span>;</div>
<div class="ln" style="top:126px;color:#7b7f86">8</div>
<div class="ln" style="top:144px;color:#7b7f86">9</div>
<div class="cl" style="top:144px"><span class="kw">import</span> <span class="ty">java</span>.<span class="ty">time</span>.<span class="ty">Clock</span>;</div>
<div class="ln" style="top:162px;color:#7b7f86">10</div>
<div class="ln" style="top:180px;color:#7b7f86">11</div>
<div class="cl" style="top:180px">@<span class="ty">SpringBootApplication</span></div>
<div class="ln" style="top:198px;color:#7b7f86">12</div>
<div class="cl" style="top:198px">@<span class="ty">Theme</span><span class="b1">(</span><span class="st">&quot;default&quot;</span><span class="b1">)</span></div>
<div class="ln" style="top:216px;color:#7b7f86">13</div>
<div class="cl" style="top:216px"><span class="kw">public</span> <span class="kw">class</span> <span class="ty">Application</span> <span class="kw">implements</span> <span class="ty">AppShellConfigurator</span> <span class="b1">{</span></div>
<div class="ln" style="top:234px;color:#7b7f86">14</div>
<div class="ln" style="top:252px;color:#7b7f86">15</div>
<div class="cl" style="top:252px">    @<span class="ty">Bean</span></div>
<div class="ln" style="top:270px;color:#7b7f86">16</div>
<div class="cl" style="top:270px">    <span class="kw">public</span> <span class="ty">Clock</span> <span class="fn">clock</span><span class="b2">()</span> <span class="b2">{</span></div>
<div class="ln" style="top:288px;color:#7b7f86">17</div>
<div class="cl" style="top:288px">        <span class="ct">return</span> <span class="ty">Clock</span>.<span class="fn">systemDefaultZone</span><span class="b3">()</span>; <span class="cm">// You can also use Clock.systemUTC()</span></div>
<div class="ln" style="top:306px;color:#7b7f86">18</div>
<div class="cl" style="top:306px">    <span class="b2">}</span></div>
<div class="ln" style="top:324px;color:#7b7f86">19</div>
<div class="ln" style="top:357px;color:#7b7f86">20</div>
<div class="cl" style="top:357px">    <span class="kw">public</span> <span class="kw">static</span> <span class="ty">void</span> <span class="fn">main</span><span class="b2">(</span><span class="ty">String</span><span class="b3">[]</span> <span class="va">args</span><span class="b2">)</span> <span class="b2">{</span></div>
<div class="ln" style="top:375px;color:#7b7f86">21</div>
<div class="cl" style="top:375px">        <span class="ty">SpringApplication</span>.<span class="fn">run</span><span class="b3">(</span><span class="ty">Application</span>.<span class="ct">class</span>, <span class="va">args</span><span class="b3">)</span>;</div>
<div class="ln" style="top:393px;color:#7b7f86">22</div>
<div class="cl" style="top:393px">    <span class="b2">}</span></div>
<div class="ln" style="top:411px;color:#7b7f86">23</div>
<div class="ln" style="top:429px;color:#7b7f86">24</div>
<div class="cl" style="top:429px"><span class="b1">}</span></div>
<div class="ln" style="top:447px;color:#7b7f86">25</div>
<span class="t" style="left:95.5px;top:342px;height:15px;line-height:15px;font-size:10.6px;color:#999;letter-spacing:-0.15px">Run | Debug</span>
<svg class="a" style="left:2.4px;top:182.1px;color:#80c780" width="13.6" height="13.6" viewBox="0 0 16 16"><circle cx="8" cy="8" r="7.1" fill="none" stroke="currentColor" stroke-width="1.05"/><path d="M3.1 3.4 C6.6 3.2 8.6 5.4 9.4 8 C10 10 11.4 11.6 13.6 12" fill="none" stroke="currentColor" stroke-linecap="round" stroke-linejoin="round" stroke-width="1.0" /><path d="M2.2 5.2 C4.6 5.2 6.2 6.4 7 8.6 C7.8 11 9.8 13.2 12.4 13.4" fill="none" stroke="currentColor" stroke-linecap="round" stroke-linejoin="round" stroke-width="1.0" /></svg>
<svg class="a" style="left:2.4px;top:254.1px;color:#80c780" width="13.6" height="13.6" viewBox="0 0 16 16"><circle cx="8" cy="8" r="7.1" fill="none" stroke="currentColor" stroke-width="1.05"/><path d="M3.1 3.4 C6.6 3.2 8.6 5.4 9.4 8 C10 10 11.4 11.6 13.6 12" fill="none" stroke="currentColor" stroke-linecap="round" stroke-linejoin="round" stroke-width="1.0" /><path d="M2.2 5.2 C4.6 5.2 6.2 6.4 7 8.6 C7.8 11 9.8 13.2 12.4 13.4" fill="none" stroke="currentColor" stroke-linecap="round" stroke-linejoin="round" stroke-width="1.0" /></svg>
</div>
<div class="a" style="left:1036px;top:130px;width:75px;height:830px;background:#1f1f1f;box-shadow:-3px 0 4px -2px rgba(0,0,0,.55);"></div>
<svg class="a" style="left:1044px;top:130px;opacity:.52" width="66" height="52" viewBox="0 0 66 52">
<rect x="0" y="0.25" width="7" height="1" fill="#569cd6"/>
<rect x="8" y="0.25" width="3" height="1" fill="#4ec9b0"/>
<rect x="11" y="0.25" width="1" height="1" fill="#cccccc"/>
<rect x="12" y="0.25" width="7" height="1" fill="#4ec9b0"/>
<rect x="19" y="0.25" width="1" height="1" fill="#cccccc"/>
<rect x="20" y="0.25" width="11" height="1" fill="#4ec9b0"/>
<rect x="31" y="0.25" width="1" height="1" fill="#cccccc"/>
<rect x="0" y="4.25" width="6" height="1" fill="#569cd6"/>
<rect x="7" y="4.25" width="3" height="1" fill="#4ec9b0"/>
<rect x="10" y="4.25" width="1" height="1" fill="#cccccc"/>
<rect x="11" y="4.25" width="6" height="1" fill="#4ec9b0"/>
<rect x="17" y="4.25" width="1" height="1" fill="#cccccc"/>
<rect x="18" y="4.25" width="4" height="1" fill="#4ec9b0"/>
<rect x="22" y="4.25" width="1" height="1" fill="#cccccc"/>
<rect x="23" y="4.25" width="9" height="1" fill="#4ec9b0"/>
<rect x="32" y="4.25" width="1" height="1" fill="#cccccc"/>
<rect x="33" y="4.25" width="4" height="1" fill="#4ec9b0"/>
<rect x="37" y="4.25" width="1" height="1" fill="#cccccc"/>
<rect x="38" y="4.25" width="20" height="1" fill="#4ec9b0"/>
<rect x="58" y="4.25" width="1" height="1" fill="#cccccc"/>
<rect x="0" y="6.25" width="6" height="1" fill="#569cd6"/>
<rect x="7" y="6.25" width="3" height="1" fill="#4ec9b0"/>
<rect x="10" y="6.25" width="1" height="1" fill="#cccccc"/>
<rect x="11" y="6.25" width="6" height="1" fill="#4ec9b0"/>
<rect x="17" y="6.25" width="1" height="1" fill="#cccccc"/>
<rect x="18" y="6.25" width="4" height="1" fill="#4ec9b0"/>
<rect x="22" y="6.25" width="1" height="1" fill="#cccccc"/>
<rect x="23" y="6.25" width="5" height="1" fill="#4ec9b0"/>
<rect x="28" y="6.25" width="1" height="1" fill="#cccccc"/>
<rect x="29" y="6.25" width="5" height="1" fill="#4ec9b0"/>
<rect x="34" y="6.25" width="1" height="1" fill="#cccccc"/>
<rect x="0" y="8.25" width="6" height="1" fill="#569cd6"/>
<rect x="7" y="8.25" width="3" height="1" fill="#4ec9b0"/>
<rect x="10" y="8.25" width="1" height="1" fill="#cccccc"/>
<rect x="11" y="8.25" width="15" height="1" fill="#4ec9b0"/>
<rect x="26" y="8.25" width="1" height="1" fill="#cccccc"/>
<rect x="27" y="8.25" width="4" height="1" fill="#4ec9b0"/>
<rect x="31" y="8.25" width="1" height="1" fill="#cccccc"/>
<rect x="32" y="8.25" width="17" height="1" fill="#4ec9b0"/>
<rect x="49" y="8.25" width="1" height="1" fill="#cccccc"/>
<rect x="0" y="10.25" width="6" height="1" fill="#569cd6"/>
<rect x="7" y="10.25" width="3" height="1" fill="#4ec9b0"/>
<rect x="10" y="10.25" width="1" height="1" fill="#cccccc"/>
<rect x="11" y="10.25" width="15" height="1" fill="#4ec9b0"/>
<rect x="26" y="10.25" width="1" height="1" fill="#cccccc"/>
<rect x="27" y="10.25" width="4" height="1" fill="#4ec9b0"/>
<rect x="31" y="10.25" width="1" height="1" fill="#cccccc"/>
<rect x="32" y="10.25" width="13" height="1" fill="#4ec9b0"/>
<rect x="45" y="10.25" width="1" height="1" fill="#cccccc"/>
<rect x="46" y="10.25" width="20" height="1" fill="#4ec9b0"/>
<rect x="0" y="12.25" width="6" height="1" fill="#569cd6"/>
<rect x="7" y="12.25" width="3" height="1" fill="#4ec9b0"/>
<rect x="10" y="12.25" width="1" height="1" fill="#cccccc"/>
<rect x="11" y="12.25" width="15" height="1" fill="#4ec9b0"/>
<rect x="26" y="12.25" width="1" height="1" fill="#cccccc"/>
<rect x="27" y="12.25" width="7" height="1" fill="#4ec9b0"/>
<rect x="34" y="12.25" width="1" height="1" fill="#cccccc"/>
<rect x="35" y="12.25" width="10" height="1" fill="#4ec9b0"/>
<rect x="45" y="12.25" width="1" height="1" fill="#cccccc"/>
<rect x="46" y="12.25" width="4" height="1" fill="#4ec9b0"/>
<rect x="50" y="12.25" width="1" height="1" fill="#cccccc"/>
<rect x="0" y="16.25" width="6" height="1" fill="#569cd6"/>
<rect x="7" y="16.25" width="4" height="1" fill="#4ec9b0"/>
<rect x="11" y="16.25" width="1" height="1" fill="#cccccc"/>
<rect x="12" y="16.25" width="4" height="1" fill="#4ec9b0"/>
<rect x="16" y="16.25" width="1" height="1" fill="#cccccc"/>
<rect x="17" y="16.25" width="5" height="1" fill="#4ec9b0"/>
<rect x="22" y="16.25" width="1" height="1" fill="#cccccc"/>
<rect x="0" y="20.25" width="1" height="1" fill="#cccccc"/>
<rect x="1" y="20.25" width="21" height="1" fill="#4ec9b0"/>
<rect x="0" y="22.25" width="1" height="1" fill="#cccccc"/>
<rect x="1" y="22.25" width="5" height="1" fill="#4ec9b0"/>
<rect x="6" y="22.25" width="1" height="1" fill="#ffd700"/>
<rect x="7" y="22.25" width="9" height="1" fill="#ce9178"/>
<rect x="16" y="22.25" width="1" height="1" fill="#ffd700"/>
<rect x="0" y="24.25" width="6" height="1" fill="#569cd6"/>
<rect x="7" y="24.25" width="5" height="1" fill="#569cd6"/>
<rect x="13" y="24.25" width="11" height="1" fill="#4ec9b0"/>
<rect x="25" y="24.25" width="10" height="1" fill="#569cd6"/>
<rect x="36" y="24.25" width="20" height="1" fill="#4ec9b0"/>
<rect x="57" y="24.25" width="1" height="1" fill="#ffd700"/>
<rect x="4" y="28.25" width="1" height="1" fill="#cccccc"/>
<rect x="5" y="28.25" width="4" height="1" fill="#4ec9b0"/>
<rect x="4" y="30.25" width="6" height="1" fill="#569cd6"/>
<rect x="11" y="30.25" width="5" height="1" fill="#4ec9b0"/>
<rect x="17" y="30.25" width="5" height="1" fill="#dcdcaa"/>
<rect x="22" y="30.25" width="2" height="1" fill="#da70d6"/>
<rect x="25" y="30.25" width="1" height="1" fill="#da70d6"/>
<rect x="8" y="32.25" width="6" height="1" fill="#c586c0"/>
<rect x="15" y="32.25" width="5" height="1" fill="#4ec9b0"/>
<rect x="20" y="32.25" width="1" height="1" fill="#cccccc"/>
<rect x="21" y="32.25" width="17" height="1" fill="#dcdcaa"/>
<rect x="38" y="32.25" width="2" height="1" fill="#179fff"/>
<rect x="40" y="32.25" width="1" height="1" fill="#cccccc"/>
<rect x="42" y="32.25" width="2" height="1" fill="#6a9955"/>
<rect x="45" y="32.25" width="3" height="1" fill="#6a9955"/>
<rect x="49" y="32.25" width="3" height="1" fill="#6a9955"/>
<rect x="53" y="32.25" width="4" height="1" fill="#6a9955"/>
<rect x="58" y="32.25" width="3" height="1" fill="#6a9955"/>
<rect x="62" y="32.25" width="4" height="1" fill="#6a9955"/>
<rect x="4" y="34.25" width="1" height="1" fill="#da70d6"/>
<rect x="4" y="38.25" width="6" height="1" fill="#569cd6"/>
<rect x="11" y="38.25" width="6" height="1" fill="#569cd6"/>
<rect x="18" y="38.25" width="4" height="1" fill="#4ec9b0"/>
<rect x="23" y="38.25" width="4" height="1" fill="#dcdcaa"/>
<rect x="27" y="38.25" width="1" height="1" fill="#da70d6"/>
<rect x="28" y="38.25" width="6" height="1" fill="#4ec9b0"/>
<rect x="34" y="38.25" width="2" height="1" fill="#179fff"/>
<rect x="37" y="38.25" width="4" height="1" fill="#9cdcfe"/>
<rect x="41" y="38.25" width="1" height="1" fill="#da70d6"/>
<rect x="43" y="38.25" width="1" height="1" fill="#da70d6"/>
<rect x="8" y="40.25" width="17" height="1" fill="#4ec9b0"/>
<rect x="25" y="40.25" width="1" height="1" fill="#cccccc"/>
<rect x="26" y="40.25" width="3" height="1" fill="#dcdcaa"/>
<rect x="29" y="40.25" width="1" height="1" fill="#179fff"/>
<rect x="30" y="40.25" width="11" height="1" fill="#4ec9b0"/>
<rect x="41" y="40.25" width="1" height="1" fill="#cccccc"/>
<rect x="42" y="40.25" width="5" height="1" fill="#c586c0"/>
<rect x="47" y="40.25" width="1" height="1" fill="#cccccc"/>
<rect x="49" y="40.25" width="4" height="1" fill="#9cdcfe"/>
<rect x="53" y="40.25" width="1" height="1" fill="#179fff"/>
<rect x="54" y="40.25" width="1" height="1" fill="#cccccc"/>
<rect x="4" y="42.25" width="1" height="1" fill="#da70d6"/>
<rect x="0" y="46.25" width="1" height="1" fill="#ffd700"/>
</svg>
<div class="a" style="left:1110px;top:130px;width:1px;height:830px;background:#171717;"></div>
<div class="a" style="left:1111px;top:131px;width:13px;height:1px;background:#a0a0a0;"></div>
<svg class="a" style="left:1010px;top:60px" width="70" height="60" viewBox="0 0 70 60"><ellipse cx="33" cy="30.8" rx="25.5" ry="22" fill="none" stroke="#e8341c" stroke-width="3.5"/></svg>
<div class="a" style="left:56px;top:960px;width:1068px;height:22px;background:#181818;border-top:1px solid #2b2b2b;box-sizing:border-box;"></div>
<div class="a" style="left:56px;top:960px;width:34px;height:22px;background:#0078d4;"></div>
<svg class="a" style="left:65px;top:963px;color:#fff" width="16" height="16" viewBox="0 0 16 16"><path d="M3.9 5.5 L7.6 9.3 L3.9 13.3 M12.4 2.2 L8.5 5.9 L12.4 10" fill="none" stroke="currentColor" stroke-linecap="round" stroke-linejoin="round" stroke-width="0.95" /></svg>
<svg class="a" style="left:97.8px;top:964px;" width="14" height="14" viewBox="0 0 16 16"><circle cx="8" cy="8" r="6.6" fill="none" stroke="currentColor" stroke-width="1.1"/><path d="M5.4 5.4 L10.6 10.6 M10.6 5.4 L5.4 10.6" fill="none" stroke="currentColor" stroke-linecap="round" stroke-linejoin="round" stroke-width="1.1" /></svg>
<span class="t" style="left:116px;top:960.3px;height:22px;line-height:22px;font-size:12px;color:#ccc;">0</span>
<svg class="a" style="left:126px;top:964px;" width="14" height="14" viewBox="0 0 16 16"><path d="M8 1.8 L15 14 H1 Z" fill="none" stroke="currentColor" stroke-linecap="round" stroke-linejoin="round" stroke-width="1.1" /><path d="M8 6.2 V10" fill="none" stroke="currentColor" stroke-linecap="round" stroke-linejoin="round" stroke-width="1.2" /><circle cx="8" cy="12" r="0.8" fill="currentColor"/></svg>
<span class="t" style="left:144px;top:960.3px;height:22px;line-height:22px;font-size:12px;color:#ccc;">0</span>
<svg class="a" style="left:155px;top:964px;" width="14" height="14" viewBox="0 0 16 16"><circle cx="8" cy="8" r="6.6" fill="none" stroke="currentColor" stroke-width="1.1"/><path d="M8 7.4 V11.4" fill="none" stroke="currentColor" stroke-linecap="round" stroke-linejoin="round" stroke-width="1.2" /><circle cx="8" cy="5" r="0.85" fill="currentColor"/></svg>
<span class="t" style="left:172.5px;top:960.3px;height:22px;line-height:22px;font-size:12px;color:#ccc;">3</span>
<svg class="a" style="left:196px;top:964.2px;" width="14" height="14" viewBox="0 0 16 16"><circle cx="8" cy="6.4" r="1.4" fill="none" stroke="currentColor" stroke-width="1.1"/><path d="M7.5 8 L5.4 14.4 M8.5 8 L10.6 14.4 M6.2 12 H9.8" fill="none" stroke="currentColor" stroke-linecap="round" stroke-linejoin="round" stroke-width="1.1" /><path d="M5.2 3.6 C4.2 5 4.2 7.8 5.2 9.2 M10.8 3.6 C11.8 5 11.8 7.8 10.8 9.2 M3.4 2 C1.6 4.4 1.6 8.4 3.4 10.8 M12.6 2 C14.4 4.4 14.4 8.4 12.6 10.8" fill="none" stroke="currentColor" stroke-linecap="round" stroke-linejoin="round" stroke-width="1.0" /></svg>
<span class="t" style="left:213.5px;top:960.3px;height:22px;line-height:22px;font-size:12px;color:#ccc;">0</span>
<svg class="a" style="left:236px;top:964.6px;" width="14" height="14" viewBox="0 0 16 16"><path d="M6 6.2 V2.2 L15.9 8.5 L10.4 12.1" fill="none" stroke="currentColor" stroke-linecap="round" stroke-linejoin="round" stroke-width="1.0" /><ellipse cx="4.8" cy="12" rx="2.3" ry="3.2" fill="currentColor" fill-opacity=".3" stroke="currentColor" stroke-width="1.1"/><path d="M3.2 9.3 L2.5 8.4 M6.4 9.3 L7.1 8.4 M2.4 11.6 H0.9 M7.2 11.6 H8.7 M2.7 13.8 L1.3 15 M6.9 13.8 L8.3 15" fill="none" stroke="currentColor" stroke-linecap="round" stroke-linejoin="round" stroke-width="0.85" /><path d="M2.9 11.3 H6.7" fill="none" stroke="currentColor" stroke-linecap="round" stroke-linejoin="round" stroke-width="0.8" /></svg>
<svg class="a" style="left:267px;top:964px;" width="14" height="14" viewBox="0 0 16 16"><path d="M2.4 6.6 H12 V10.4 A4 4 0 0 1 8 14.4 H6.4 A4 4 0 0 1 2.4 10.4 Z" fill="none" stroke="currentColor" stroke-linecap="round" stroke-linejoin="round" stroke-width="1.1" /><path d="M12 7.6 H13.6 A1.6 1.6 0 0 1 13.6 10.8 H12" fill="none" stroke="currentColor" stroke-linecap="round" stroke-linejoin="round" stroke-width="1.1" /><path d="M4.2 1.6 L5.6 4.6 M6.6 1.6 L8 4.6 M9 1.6 L10.4 4.6" fill="none" stroke="currentColor" stroke-linecap="round" stroke-linejoin="round" stroke-width="0.95" /></svg>
<span class="t" style="left:284px;top:960.3px;height:22px;line-height:22px;font-size:12px;color:#ccc;letter-spacing:0.06px;">Java: Ready</span>
<svg class="a" style="left:367.5px;top:964px;" width="14" height="14" viewBox="0 0 16 16"><path d="M8 1.4 C9.8 2.8 11.6 3.4 13.8 3.4 V8 C13.8 11.4 11.4 13.8 8 15 C4.6 13.8 2.2 11.4 2.2 8 V3.4 C4.4 3.4 6.2 2.8 8 1.4 Z" fill="none" stroke="currentColor" stroke-linecap="round" stroke-linejoin="round" stroke-width="1.1" /><circle cx="8" cy="6.6" r="1.3" fill="currentColor"/><path d="M8 7 V10.4" fill="none" stroke="currentColor" stroke-linecap="round" stroke-linejoin="round" stroke-width="1.5" /></svg>
<svg class="a" style="left:381.5px;top:964px;" width="14" height="14" viewBox="0 0 16 16"><path d="M2.6 9 L6 12.6 L13.4 3.6" fill="none" stroke="currentColor" stroke-linecap="round" stroke-linejoin="round" stroke-width="1.05" /></svg>
<span class="t" style="left:777.6px;top:960.3px;height:22px;line-height:22px;font-size:12px;color:#ccc;letter-spacing:0.265px;">Ln 1, Col 1</span>
<span class="t" style="left:854.8px;top:960.3px;height:22px;line-height:22px;font-size:12px;color:#ccc;letter-spacing:0.228px;">Spaces: 4</span>
<span class="t" style="left:927px;top:960.3px;height:22px;line-height:22px;font-size:12px;color:#ccc;letter-spacing:0.6px;">UTF-8</span>
<span class="t" style="left:979.5px;top:960.3px;height:22px;line-height:22px;font-size:12px;color:#ccc;letter-spacing:-0.216px;">LF</span>
<span class="t" style="left:1009px;top:958.8px;height:22px;line-height:22px;font-size:10.5px;color:#ccc;letter-spacing:0.131px;">{ }</span>
<span class="t" style="left:1027.4px;top:960.3px;height:22px;line-height:22px;font-size:12px;color:#ccc;letter-spacing:-0.22px;">Java</span>
<svg class="a" style="left:1066px;top:964.3px;" width="14" height="14" viewBox="0 0 16 16"><path d="M1.2 2.6 C1.2 4.6 2.4 5.2 4.4 5.2 H5.8 C7.2 5.2 8 6 8 7.6 C8 6 8.8 5.2 10.2 5.2 H11.6 C13.6 5.2 14.8 4.6 14.8 2.6" fill="none" stroke="currentColor" stroke-linecap="round" stroke-linejoin="round" stroke-width="1.7" /><path d="M5 9.4 L8 14.4 L11 9.4" fill="none" stroke="currentColor" stroke-linecap="round" stroke-linejoin="round" stroke-width="1.9" /></svg>
<svg class="a" style="left:1095.3px;top:964px;" width="14" height="14" viewBox="0 0 16 16"><path d="M3 12.2 H13 L11.8 10.2 V7 A3.8 3.8 0 0 0 4.2 7 V10.2 Z" fill="none" stroke="currentColor" stroke-linecap="round" stroke-linejoin="round" stroke-width="1.25" /><path d="M6.6 14.2 A1.5 1.5 0 0 0 9.4 14.2" fill="none" stroke="currentColor" stroke-linecap="round" stroke-linejoin="round" stroke-width="1.25" /><circle cx="12" cy="4" r="3.6" fill="#181818"/><circle cx="12" cy="4" r="2.6" fill="currentColor"/></svg>
<div class="a" style="left:56px;top:38px;width:1068px;height:1px;background:rgba(242,242,242,.42);"></div>
<div class="a" style="left:56px;top:981px;width:1068px;height:1px;background:rgba(176,176,176,.38);"></div>
</div></div>
</body>
</html>
